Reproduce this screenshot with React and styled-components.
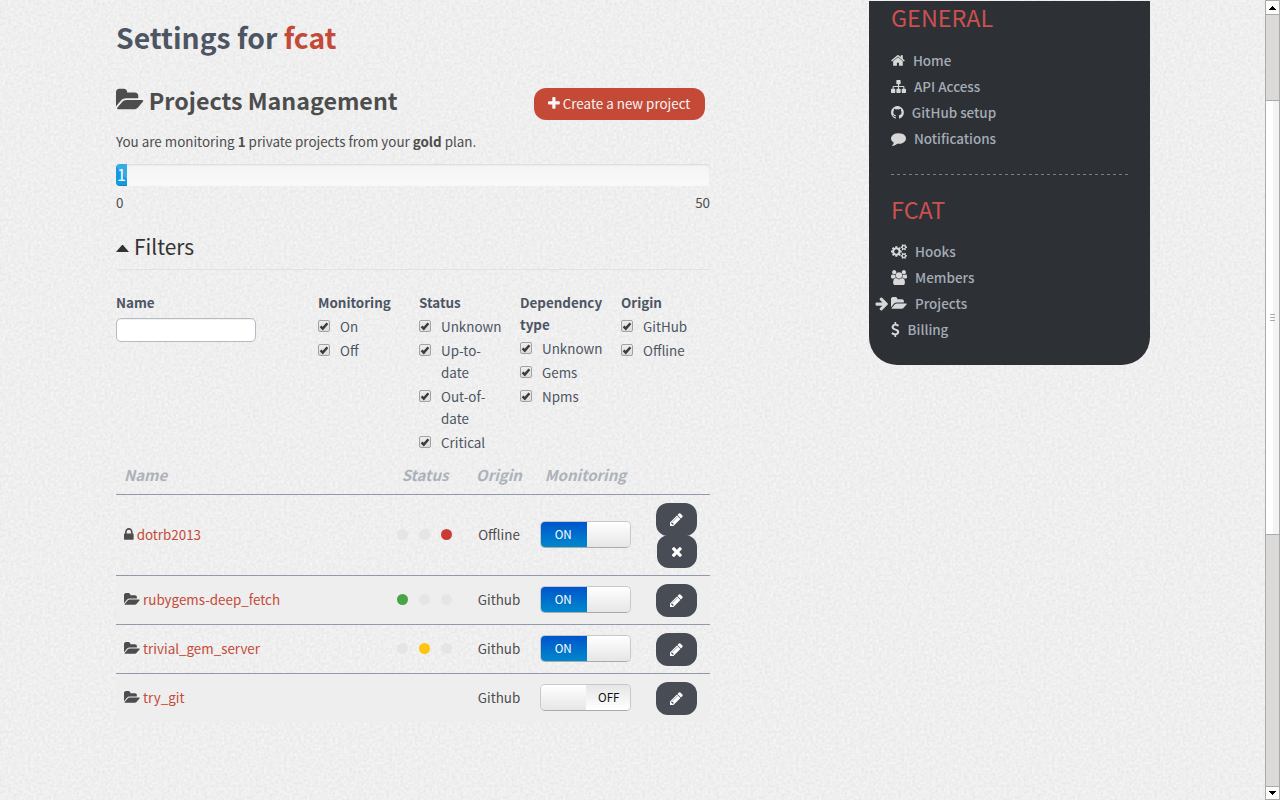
import React from "react";
import styled, { createGlobalStyle } from "styled-components";

const noise = encodeURIComponent(
  `<svg xmlns="http://www.w3.org/2000/svg" width="256" height="256"><filter id="n" x="0" y="0" width="100%" height="100%" color-interpolation-filters="sRGB"><feTurbulence type="fractalNoise" baseFrequency="0.35" numOctaves="2" seed="4" stitchTiles="stitch"/><feColorMatrix values="0.085 0 0 0 0.894 0.085 0 0 0 0.894 0.085 0 0 0 0.894 0 0 0 0 1"/></filter><rect width="256" height="256" filter="url(#n)"/></svg>`
);

const GlobalStyle = createGlobalStyle`
  * { box-sizing: border-box; }
  html, body { margin: 0; padding: 0; }
  body {
    width: 1280px;
    height: 800px;
    overflow: hidden;
    background: #efefef url("data:image/svg+xml,${noise}");
    font-family: "Noto Sans CJK JP", "Open Sans", sans-serif;
    font-size: 13.4px;
    line-height: 22px;
    color: #4d4d4d;
  }
`;

const glyphs = {
  folder: [-64, 1920, "M1815 952q0 31-31 66l-336 396q-43 51-120.5 86.5t-143.5 35.5h-1088q-34 0-60.5-13t-26.5-43q0-31 31-66l336-396q43-51 120.5-86.5t143.5-35.5h1088q34 0 60.5 13t26.5 43zm-343-344v160h-832q-94 0-197 47.5t-164 119.5l-337 396-5 6q0-4-.5-12.5t-.5-12.5v-960q0-92 66-158t158-66h320q92 0 158 66t66 158v32h544q92 0 158 66t66 158z"],
  plus: [192, 1408, "M1600 736v192q0 40-28 68t-68 28h-416v416q0 40-28 68t-68 28h-192q-40 0-68-28t-28-68v-416h-416q-40 0-68-28t-28-68v-192q0-40 28-68t68-28h416v-416q0-40 28-68t68-28h192q40 0 68 28t28 68v416h416q40 0 68 28t28 68z"],
  lock: [320, 1152, "M640 768h512v-192q0-106-75-181t-181-75-181 75-75 181v192zm832 96v576q0 40-28 68t-68 28h-960q-40 0-68-28t-28-68v-576q0-40 28-68t68-28h32v-192q0-184 132-316t316-132 316 132 132 316v192h32q40 0 68 28t28 68z"],
  pencil: [128, 1536, "M491 1536l91-91-235-235-91 91v107h128v128h107zm523-928q0-22-22-22-10 0-17 7l-542 542q-7 7-7 17 0 22 22 22 10 0 17-7l542-542q7-7 7-17zm-54-192l416 416-832 832h-416v-416zm683 96q0 53-37 90l-166 166-416-416 166-165q36-38 90-38 53 0 91 38l235 234q37 39 37 91z"],
  times: [192, 1408, "M1490 1322q0 40-28 68l-136 136q-28 28-68 28t-68-28l-294-294-294 294q-28 28-68 28t-68-28l-136-136q-28-28-28-68t28-68l294-294-294-294q-28-28-28-68t28-68l136-136q28-28 68-28t68 28l294 294 294-294q28-28 68-28t68 28l136 136q28 28 28 68t-28 68l-294 294 294 294q28 28 28 68z"],
  home: [64, 1664, "M1472 992v480q0 26-19 45t-45 19h-384v-384h-256v384h-384q-26 0-45-19t-19-45v-480q0-1 .5-3t.5-3l575-474 575 474q1 2 1 6zm223-69l-62 74q-8 9-21 11h-3q-13 0-21-7l-692-577-692 577q-12 8-24 7-13-2-21-11l-62-74q-8-10-7-23.5t11-21.5l719-599q32-26 76-26t76 26l244 204v-195q0-14 9-23t23-9h192q14 0 23 9t9 23v408l219 182q10 8 11 21.5t-7 23.5z"],
  sitemap: [0, 1792, "M1792 1248v320q0 40-28 68t-68 28h-320q-40 0-68-28t-28-68v-320q0-40 28-68t68-28h96v-192h-512v192h96q40 0 68 28t28 68v320q0 40-28 68t-68 28h-320q-40 0-68-28t-28-68v-320q0-40 28-68t68-28h96v-192h-512v192h96q40 0 68 28t28 68v320q0 40-28 68t-68 28h-320q-40 0-68-28t-28-68v-320q0-40 28-68t68-28h96v-192q0-52 38-90t90-38h512v-192h-96q-40 0-68-28t-28-68v-320q0-40 28-68t68-28h320q40 0 68 28t28 68v320q0 40-28 68t-68 28h-96v192h512q52 0 90 38t38 90v192h96q40 0 68 28t28 68z"],
  github: [128, 1536, "M896 128q209 0 385.5 103t279.5 279.5 103 385.5q0 251-146.5 451.5t-378.5 277.5q-27 5-40-7t-13-30q0-3 .5-76.5t.5-134.5q0-97-52-142 57-6 102.5-18t94-39 81-66.5 53-105 20.5-150.5q0-119-79-206 37-91-8-204-28-9-81 11t-92 44l-38 24q-93-26-192-26t-192 26q-16-11-42.5-27t-83.5-38.5-85-13.5q-45 113-8 204-79 87-79 206 0 85 20.5 150t52.5 105 80.5 67 94 39 102.5 18q-39 36-49 103-21 10-45 15t-57 5-65.5-21.5-55.5-62.5q-19-32-48.5-52t-49.5-24l-20-3q-21 0-29 4.5t-5 11.5 9 14 13 12l7 5q22 10 43.5 38t31.5 51l10 23q13 38 44 61.5t67 30 69.5 7 55.5-3.5l23-4q0 38 .5 88.5t.5 54.5q0 18-13 30t-40 7q-232-77-378.5-277.5t-146.5-451.5q0-209 103-385.5t279.5-279.5 385.5-103z"],
  comment: [0, 1792, "M1792 896q0 174-120 321.5t-326 233-450 85.5q-70 0-145-8-198 175-460 242-49 14-114 22-17 2-30.5-9t-17.5-29v-1q-3-4-.5-12t2-10 4.5-9.5l6-9 7-8.5 8-9q7-8 31-34.5t34.5-38 31-39.5 32.5-51 27-59 26-76q-157-89-247.5-220t-90.5-281q0-130 71-248.5t191-204.5 286-136.5 348-50.5q244 0 450 85.5t326 233 120 321.5z"],
  cogs: [-64, 1920, "M832 896q0-106-75-181t-181-75-181 75-75 181 75 181 181 75 181-75 75-181zm768 512q0-52-38-90t-90-38-90 38-38 90q0 53 37.5 90.5t90.5 37.5 90.5-37.5 37.5-90.5zm0-1024q0-52-38-90t-90-38-90 38-38 90q0 53 37.5 90.5t90.5 37.5 90.5-37.5 37.5-90.5zm-384 421v185q0 10-7 19.5t-16 10.5l-155 24q-11 35-32 76 34 48 90 115 7 11 7 20 0 12-7 19-23 30-82.5 89.5t-78.5 59.5q-11 0-21-7l-115-90q-37 19-77 31-11 108-23 155-7 24-30 24h-186q-11 0-20-7.5t-10-17.5l-23-153q-34-10-75-31l-118 89q-7 7-20 7-11 0-21-8-144-133-144-160 0-9 7-19 10-14 41-53t47-61q-23-44-35-82l-152-24q-10-1-17-9.5t-7-19.5v-185q0-10 7-19.5t16-10.5l155-24q11-35 32-76-34-48-90-115-7-11-7-20 0-12 7-20 22-30 82-89t79-59q11 0 21 7l115 90q34-18 77-32 11-108 23-154 7-24 30-24h186q11 0 20 7.5t10 17.5l23 153q34 10 75 31l118-89q8-7 20-7 11 0 21 8 144 133 144 160 0 8-7 19-12 16-42 54t-45 60q23 48 34 82l152 23q10 2 17 10.5t7 19.5zm640 533v140q0 16-149 31-12 27-30 52 51 113 51 138 0 4-4 7-122 71-124 71-8 0-46-47t-52-68q-20 2-30 2t-30-2q-14 21-52 68t-46 47q-2 0-124-71-4-3-4-7 0-25 51-138-18-25-30-52-149-15-149-31v-140q0-16 149-31 13-29 30-52-51-113-51-138 0-4 4-7 4-2 35-20t59-34 30-16q8 0 46 46.5t52 67.5q20-2 30-2t30 2q51-71 92-112l6-2q4 0 124 70 4 3 4 7 0 25-51 138 17 23 30 52 149 15 149 31zm0-1024v140q0 16-149 31-12 27-30 52 51 113 51 138 0 4-4 7-122 71-124 71-8 0-46-47t-52-68q-20 2-30 2t-30-2q-14 21-52 68t-46 47q-2 0-124-71-4-3-4-7 0-25 51-138-18-25-30-52-149-15-149-31v-140q0-16 149-31 13-29 30-52-51-113-51-138 0-4 4-7 4-2 35-20t59-34 30-16q8 0 46 46.5t52 67.5q20-2 30-2t30 2q51-71 92-112l6-2q4 0 124 70 4 3 4 7 0 25-51 138 17 23 30 52 149 15 149 31z"],
  users: [-64, 1920, "M529 896q-162 5-265 128h-134q-82 0-138-40.5t-56-118.5q0-353 124-353 6 0 43.5 21t97.5 42.5 119 21.5q67 0 133-23-5 37-5 66 0 139 81 256zm1071 637q0 120-73 189.5t-194 69.5h-874q-121 0-194-69.5t-73-189.5q0-53 3.5-103.5t14-109 26.5-108.5 43-97.5 62-81 85.5-53.5 111.5-20q10 0 43 21.5t73 48 107 48 135 21.5 135-21.5 107-48 73-48 43-21.5q61 0 111.5 20t85.5 53.5 62 81 43 97.5 26.5 108.5 14 109 3.5 103.5zm-1024-1277q0 106-75 181t-181 75-181-75-75-181 75-181 181-75 181 75 75 181zm704 384q0 159-112.5 271.5t-271.5 112.5-271.5-112.5-112.5-271.5 112.5-271.5 271.5-112.5 271.5 112.5 112.5 271.5zm576 225q0 78-56 118.5t-138 40.5h-134q-103-123-265-128 81-117 81-256 0-29-5-66 66 23 133 23 59 0 119-21.5t97.5-42.5 43.5-21q124 0 124 353zm-128-609q0 106-75 181t-181 75-181-75-75-181 75-181 181-75 181 75 75 181z"],
  arrow: [64, 1600, "M1600 960q0 54-37 91l-651 651q-39 37-91 37-51 0-90-37l-75-75q-38-38-38-91t38-91l293-293h-704q-52 0-84.5-37.5t-32.5-90.5v-128q0-53 32.5-90.5t84.5-37.5h704l-293-294q-38-36-38-90t38-90l75-75q38-38 90-38 53 0 91 38l651 651q37 35 37 90z"],
  dollar: [384, 1024, "M1362 1185q0 153-99.5 263.5t-258.5 136.5v175q0 14-9 23t-23 9h-135q-13 0-22.5-9.5t-9.5-22.5v-175q-66-9-127.5-31t-101.5-44.5-74-48-46.5-37.5-17.5-18q-17-21-2-41l103-135q7-10 23-12 15-2 24 9l2 2q113 99 243 125 37 8 74 8 81 0 142.5-43t61.5-122q0-28-15-53t-33.5-42-58.5-37.5-66-32-80-32.5q-39-16-61.5-25t-61.5-26.5-62.5-31-56.5-35.5-53.5-42.5-43.5-49-35.5-58-21-66.5-8.5-78q0-138 98-242t255-134v-180q0-13 9.5-22.5t22.5-9.5h135q14 0 23 9t9 23v176q57 6 110.5 23t87 33.5 63.5 37.5 39 29 15 14q17 18 5 38l-81 146q-8 15-23 16-14 3-27-7-3-3-14.5-12t-39-26.5-58.5-32-74.5-26-85.5-11.5q-95 0-155 43t-60 111q0 26 8.5 48t29.5 41.5 39.5 33 56 31 60.5 27 70 27.5q53 20 81 31.5t76 35 75.5 42.5 62 50 53 63.5 31.5 76.5 13 94z"],
};

const Svg = styled.svg`
  display: block;
  flex: none;
  fill: currentColor;
  overflow: visible;
`;

function Icon({ name, size = 15, className }) {
  const [x, w, d] = glyphs[name];
  return (
    <Svg className={className} viewBox={`${x} 0 ${w} 1792`} width={(w / 1792) * size} height={size} aria-hidden="true">
      <path d={d} />
    </Svg>
  );
}

const Screen = styled.div`
  display: flex;
  width: 1280px;
  height: 800px;
`;
const Page = styled.div`
  display: flex;
  flex: 1;
  padding-left: 116px;
  gap: 159px;
  align-items: flex-start;
`;
const Main = styled.main`
  width: 594px;
  padding-top: 17px;
`;
const Title = styled.h1`
  margin: 0;
  font-size: 28.3px;
  line-height: 40px;
  font-weight: 700;
  color: #4d5563;
  em { font-style: normal; color: #c44a37; }
`;
const HeadRow = styled.div`
  display: flex;
  align-items: center;
  justify-content: space-between;
  height: 32px;
  margin-top: 31px;
  padding-right: 5px;
`;
const Heading = styled.h2`
  display: flex;
  align-items: center;
  gap: 5px;
  margin: 0 0 8px;
  font-size: 23.27px;
  line-height: 30px;
  font-weight: 700;
`;
const CreateButton = styled.button`
  display: flex;
  align-items: center;
  gap: 3px;
  width: 171px;
  height: 32px;
  padding: 0 0 2px 14px;
  border: 0;
  border-radius: 12px;
  background: #c44a37;
  color: #f5f5f5;
  font: inherit;
  white-space: nowrap;
`;
const Intro = styled.p`
  margin: 10px 0 12px;
  line-height: 22px;
`;
const Track = styled.div`
  height: 22px;
  border-radius: 4px;
  background: linear-gradient(#f4f4f4, #f9f9f9);
  box-shadow: inset 0 1px 2px rgba(0, 0, 0, 0.12);
`;
const Fill = styled.div`
  width: 11px;
  height: 22px;
  border-radius: 4px 0 0 4px;
  background: linear-gradient(50deg, #149bdf 55%, #37abe4 56%);
  box-shadow: inset 0 -1px 0 rgba(0, 0, 0, 0.15);
  color: #fff;
  font-size: 16px;
  line-height: 21px;
  text-align: center;
`;
const Scale = styled.div`
  display: flex;
  justify-content: space-between;
  margin-top: 5px;
`;
const FilterTitle = styled.h3`
  display: flex;
  align-items: center;
  gap: 5px;
  height: 45px;
  margin: 12px 0 21px;
  padding-bottom: 2px;
  border-bottom: 1px solid #e2e2e2;
  font-size: 20.9px;
  font-weight: 400;
  color: #333;
`;
const Caret = styled.span`
  width: 13px;
  border: 6.5px solid transparent;
  border-top: 0;
  border-bottom: 7px solid #333;
  margin-top: 4px;
`;
const Filters = styled.div`
  display: grid;
  grid-template-columns: 202px repeat(4, 101px);
  height: 163px;
  color: #4d5563;
`;
const FilterLabel = styled.div`
  width: 86px;
  line-height: 22px;
  font-weight: 700;
`;
const NameInput = styled.input`
  display: block;
  width: 140px;
  height: 24px;
  margin-top: 5px;
  border: 1px solid #b6bac2;
  border-radius: 5px;
  background: #fff;
  box-shadow: inset 0 1px 1px rgba(0, 0, 0, 0.06);
`;
const Option = styled.div`
  display: flex;
  align-items: flex-start;
  gap: 10px;
  width: 88px;
  padding: 2px 0 0;
`;
const Box = styled.span`
  flex: none;
  width: 12px;
  height: 12px;
  margin-top: 5px;
  border: 1px solid #a2a2a2;
  border-radius: 2px;
  background: linear-gradient(#eee, #dcdcdc);
  svg { display: block; width: 10px; height: 10px; overflow: visible; }
`;
const OptionText = styled.span`
  white-space: pre-line;
`;
const Row = styled.div`
  display: grid;
  grid-template-columns: 259px 100px 48px 125px 57px;
  align-items: center;
  justify-items: center;
  height: ${(p) => p.$h || 49}px;
  border-top: 1px solid ${(p) => (p.$head ? "transparent" : "#9299a8")};
  background: ${(p) => (p.$flat ? "#eee" : "transparent")};
`;
const HeadCell = styled.div`
  justify-self: ${(p) => (p.$left ? "start" : "center")};
  padding-left: ${(p) => (p.$left ? 8 : 0)}px;
  font-size: 15px;
  font-weight: 700;
  font-style: italic;
  color: #adb2ba;
`;
const NameCell = styled.div`
  display: flex;
  align-items: center;
  justify-self: start;
  gap: 3px;
  padding-left: 8px;
  margin-bottom: 2px;
  a { color: #c44a37; }
`;
const OriginCell = styled.div`
  margin-bottom: 2px;
`;
const Lights = styled.div`
  display: flex;
  gap: 11px;
  margin: 0 2px 1px 0;
`;
const Light = styled.i`
  width: 11px;
  height: 11px;
  border-radius: 50%;
  background: ${(p) => p.$color || "#e5e5e5"};
`;
const Switch = styled.div`
  display: flex;
  width: 91px;
  height: 27px;
  margin-bottom: 1px;
  border: 1px solid #c8c8c8;
  border-bottom-color: #aaa;
  border-radius: 5px;
  overflow: hidden;
  font-size: 11.64px;
  line-height: 24px;
  text-align: center;
`;
const Label = styled.span`
  width: ${(p) => (p.$on ? 45.5 : 44.5)}px;
  padding: ${(p) => (p.$on ? "0 1px 0 0" : "0 0 0 2px")};
  background: ${(p) => (p.$on ? "linear-gradient(#0055cc, #0088cc)" : "linear-gradient(#e6e6e6, #fff)")};
  color: ${(p) => (p.$on ? "#fff" : "#111")};
`;
const Knob = styled.span`
  flex: 1;
  background: linear-gradient(#fff, #e6e6e6);
`;
const Actions = styled.div`
  display: flex;
  flex-direction: column;
  align-items: flex-end;
`;
const ActionButton = styled.button`
  display: flex;
  align-items: center;
  justify-content: center;
  width: ${(p) => p.$w || 41}px;
  height: 33px;
  margin-bottom: ${(p) => (p.$tight ? -1 : 0)}px;
  padding: 0;
  border: 0;
  border-radius: 12px;
  background: #484c55;
  color: #fff;
`;

const Sidebar = styled.aside`
  width: 281px;
  height: 364px;
  margin-top: 1px;
  padding: 0 22px;
  border-radius: 0 0 28px 28px;
  background: #2d3035;
`;
const SideTitle = styled.h2`
  margin: 0;
  padding-top: ${(p) => p.$top}px;
  height: ${(p) => p.$h}px;
  font-size: 23.4px;
  line-height: 32px;
  font-weight: 400;
  color: #cb5150;
`;
const SideItem = styled.div`
  display: flex;
  align-items: center;
  gap: 8px;
  position: relative;
  height: 26px;
  font-size: 13.43px;
  font-weight: 500;
  color: #a5acb6;
  svg { color: #d8d8d8; }
`;
const Marker = styled.span`
  position: absolute;
  left: -16px;
  top: 6px;
`;
const Divider = styled.hr`
  width: 237px;
  height: 1px;
  margin: 23px 0 0;
  border: 0;
  background: repeating-linear-gradient(90deg, #7a7c80 0 3px, transparent 3px 6px);
`;

const ScrollBar = styled.div`
  display: flex;
  flex-direction: column;
  width: 15px;
  height: 800px;
  border: 1px solid #aaa;
  border-width: 0 1px;
  background: #dcdad9;
`;
const ScrollArrow = styled.div`
  display: flex;
  align-items: center;
  justify-content: center;
  height: ${(p) => (p.$down ? 14 : 15)}px;
  border: 0 solid #aaa;
  border-width: 1px 0;
  background: #fdfdfc;
  svg { fill: #000; }
`;
const Thumb = styled.div`
  display: flex;
  flex-direction: column;
  align-items: center;
  justify-content: center;
  gap: 2px;
  height: 435px;
  margin: 85px 0 auto;
  border: 1px solid #aaa;
  border-width: 1px 0;
  background: linear-gradient(90deg, #fff 7px, #f3f3f3 7px);
  i { width: 5px; height: 1px; background: #aaa; }
`;

const filters = [
  ["Monitoring", ["On", "Off"]],
  ["Status", ["Unknown", "Up-to-\ndate", "Out-of-\ndate", "Critical"]],
  ["Dependency type", ["Unknown", "Gems", "Npms"]],
  ["Origin", ["GitHub", "Offline"]],
];
const projects = [
  { name: "dotrb2013", icon: "lock", lights: [null, null, "#cb3b36"], origin: "Offline", on: true, removable: true },
  { name: "rubygems-deep_fetch", icon: "folder", lights: ["#46a546", null, null], origin: "Github", on: true, flat: true },
  { name: "trivial_gem_server", icon: "folder", lights: [null, "#ffc40d", null], origin: "Github", on: true },
  { name: "try_git", icon: "folder", lights: [], origin: "Github", on: false, flat: true },
];
const general = [["home", "Home"], ["sitemap", "API Access"], ["github", "GitHub setup"], ["comment", "Notifications"]];
const account = [["cogs", "Hooks"], ["users", "Members"], ["folder", "Projects"], ["dollar", "Billing"]];

function Checkbox({ children }) {
  return (
    <Option>
      <Box>
        <svg viewBox="0 0 10 10"><path d="M1.6 5.3 L3.8 7.6 L8.4 2.2" fill="none" stroke="#3c3c3c" strokeWidth="2.5" /></svg>
      </Box>
      <OptionText>{children}</OptionText>
    </Option>
  );
}

function Menu({ items }) {
  return items.map(([icon, text]) => (
    <SideItem key={text}>
      {text === "Projects" && <Marker><Icon name="arrow" size={15} /></Marker>}
      <Icon name={icon} />
      {text}
    </SideItem>
  ));
}

export default function App() {
  return (
    <>
      <GlobalStyle />
      <Screen>
        <Page>
          <Main>
            <Title>Settings for <em>fcat</em></Title>
            <HeadRow>
              <Heading><Icon name="folder" size={26} />Projects Management</Heading>
              <CreateButton><Icon name="plus" />Create a new project</CreateButton>
            </HeadRow>
            <Intro>You are monitoring <b>1</b> private projects from your <b>gold</b> plan.</Intro>
            <Track><Fill>1</Fill></Track>
            <Scale><span>0</span><span>50</span></Scale>
            <FilterTitle><Caret />Filters</FilterTitle>
            <Filters>
              <div>
                <FilterLabel>Name</FilterLabel>
                <NameInput aria-label="Name" />
              </div>
              {filters.map(([label, options]) => (
                <div key={label}>
                  <FilterLabel>{label}</FilterLabel>
                  {options.map((o) => <Checkbox key={o}>{o}</Checkbox>)}
                </div>
              ))}
            </Filters>
            <Row $head $h={40}>
              <HeadCell $left>Name</HeadCell>
              <HeadCell>Status</HeadCell>
              <HeadCell>Origin</HeadCell>
              <HeadCell>Monitoring</HeadCell>
            </Row>
            {projects.map((p) => (
              <Row key={p.name} $h={p.removable ? 81 : 49} $flat={p.flat}>
                <NameCell><Icon name={p.icon} /><a>{p.name}</a></NameCell>
                <Lights>{p.lights.map((c, i) => <Light key={i} $color={c} />)}</Lights>
                <OriginCell>{p.origin}</OriginCell>
                <Switch>
                  {p.on ? <><Label $on>ON</Label><Knob /></> : <><Knob /><Label>OFF</Label></>}
                </Switch>
                <Actions>
                  <ActionButton $tight={p.removable}><Icon name="pencil" /></ActionButton>
                  {p.removable && <ActionButton $w={40}><Icon name="times" /></ActionButton>}
                </Actions>
              </Row>
            ))}
          </Main>
          <Sidebar>
            <SideTitle $top={0} $h={46}>GENERAL</SideTitle>
            <Menu items={general} />
            <Divider />
            <SideTitle $top={18} $h={63}>FCAT</SideTitle>
            <Menu items={account} />
          </Sidebar>
        </Page>
        <ScrollBar>
          <ScrollArrow><svg width="7" height="4"><path d="M3 0h1v1h1v1h1v1h1v1H0V3h1V2h1V1h1z" /></svg></ScrollArrow>
          <Thumb><i /><i /><i /></Thumb>
          <ScrollArrow $down><svg width="7" height="4"><path d="M0 0h7v1H6v1H5v1H4v1H3V3H2V2H1V1H0z" /></svg></ScrollArrow>
        </ScrollBar>
      </Screen>
    </>
  );
}
